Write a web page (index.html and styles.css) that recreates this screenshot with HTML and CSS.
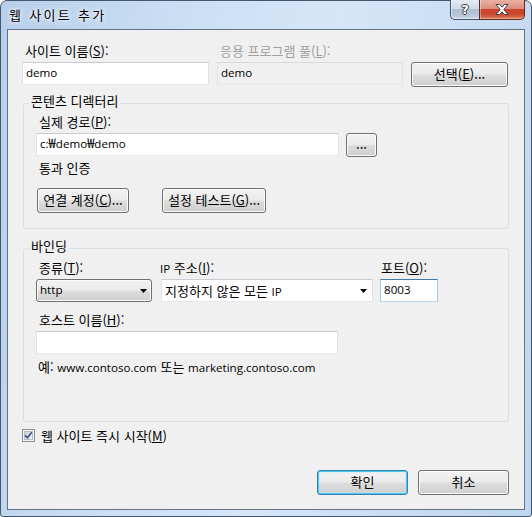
FILE: index.html
```html
<!DOCTYPE html>
<html lang="ko">
<head>
<meta charset="utf-8">
<title>웹 사이트 추가</title>
<link rel="stylesheet" href="styles.css">
</head>
<body>
<div class="window">
  <div class="titlebar">
    <div class="title">웹 사이트 추가</div>
    <div class="caption">
      <div class="cbtn help"><span>?</span></div>
      <div class="cbtn close">
        <svg width="14" height="11" viewBox="0 0 14 11"><path d="M1 0.5 H4.5 L7 3.2 L9.5 0.5 H13 L8.8 5.5 L13 10.5 H9.5 L7 7.8 L4.5 10.5 H1 L5.2 5.5 Z" fill="#fff" stroke="#3d3d3d" stroke-width="1" stroke-linejoin="round"/></svg>
      </div>
    </div>
  </div>
  <div class="client">
    <div class="row top-row">
      <div class="col site-col">
        <div class="lbl">사이트 이름(<u>S</u>):</div>
        <div class="tb"><span class="en" lang="en">demo</span></div>
      </div>
      <div class="col pool-col">
        <div class="lbl disabled">응용 프로그램 풀(<u>L</u>):</div>
        <div class="tb ro"><span class="en" lang="en">demo</span></div>
      </div>
      <div class="btn b-select">선택(<u>E</u>)...</div>
    </div>

    <div class="group g-content">
      <div class="legend">콘텐츠 디렉터리</div>
      <div class="lbl path-lbl">실제 경로(<u>P</u>):</div>
      <div class="row path-row">
        <div class="tb tb-path"><span class="en" lang="en">c:</span>₩<span class="en" lang="en">demo</span>₩<span class="en" lang="en">demo</span></div>
        <div class="btn b-browse">...</div>
      </div>
      <div class="lbl pass">통과 인증</div>
      <div class="row btn-row">
        <div class="btn b-connect">연결 계정(<u>C</u>)...</div>
        <div class="btn b-test">설정 테스트(<u>G</u>)...</div>
      </div>
    </div>

    <div class="group g-binding">
      <div class="legend">바인딩</div>
      <div class="row bind-row">
        <div class="col type-col">
          <div class="lbl">종류(<u>T</u>):</div>
          <div class="dd">
            <span class="en" lang="en">http</span>
            <svg class="arrow" width="7" height="4" viewBox="0 0 7 4"><path d="M0 0 H7 L3.5 4 Z" fill="#000"/></svg>
          </div>
        </div>
        <div class="col ip-col">
          <div class="lbl ip-lbl"><span class="en" lang="en">IP</span> 주소(<u>I</u>):</div>
          <div class="combo">
            <span>지정하지 않은 모든 <span class="en" lang="en">IP</span></span>
            <svg class="arrow" width="7" height="4" viewBox="0 0 7 4"><path d="M0 0 H7 L3.5 4 Z" fill="#000"/></svg>
          </div>
        </div>
        <div class="col port-col">
          <div class="lbl port-lbl">포트(<u>O</u>):</div>
          <div class="tb focus"><span class="en" lang="en">8003</span></div>
        </div>
      </div>
      <div class="lbl host-lbl">호스트 이름(<u>H</u>):</div>
      <div class="tb tb-host"></div>
      <div class="example">예: <span class="en" lang="en">www.contoso.com</span> 또는 <span class="en" lang="en">marketing.contoso.com</span></div>
    </div>

    <div class="row check-row">
      <svg class="chk" width="13" height="13" viewBox="0 0 13 13">
        <defs>
          <linearGradient id="cg" x1="0" y1="0" x2="1" y2="1">
            <stop offset="0" stop-color="#cbcfd5"/>
            <stop offset="1" stop-color="#f6f6f6"/>
          </linearGradient>
        </defs>
        <rect x="0.5" y="0.5" width="12" height="12" fill="#f4f4f4" stroke="#8e8f8f"/>
        <rect x="2.5" y="2.5" width="8" height="8" fill="url(#cg)" stroke="#b6bcc4"/>
        <path d="M3.2 6.4 L5.4 8.8 L9.8 3.2" fill="none" stroke="#3b5487" stroke-width="1.7"/>
      </svg>
      <span class="chk-lbl">웹 사이트 즉시 시작(<u>M</u>)</span>
    </div>

    <div class="row footer">
      <div class="btn default">확인</div>
      <div class="btn">취소</div>
    </div>
  </div>
</div>
</body>
</html>
```

FILE: styles.css
```css
html, body {
  margin: 0;
  padding: 0;
}

body {
  width: 532px;
  height: 517px;
  background: #ffffff;
  font-family: "Noto Sans CJK KR", sans-serif;
  font-size: 13px;
  color: #000;
}

.en {
  font-family: "Open Sans", "Noto Sans CJK KR", sans-serif;
  font-size: 11.6px;
  line-height: 12px;
}

.window {
  box-sizing: border-box;
  width: 532px;
  height: 517px;
  border: 1px solid #44576d;
  border-radius: 7px 7px 3px 3px;
  background: linear-gradient(100deg, #b7cfea 0%, #cbdff4 30%, #d6e6f7 55%, #c8dcf2 80%, #bed6ef 100%);
  padding: 0 6px 6px;
  display: flex;
  flex-direction: column;
}

.titlebar {
  height: 28px;
  flex: none;
  display: flex;
  justify-content: space-between;
  align-items: flex-start;
}

.title {
  margin: 6px 0 0 2px;
  line-height: 16px;
  letter-spacing: 2.3px;
  text-shadow: 0 0 6px #ffffff, 0 0 3px #ffffff;
}

.caption {
  display: flex;
  margin-top: -1px;
}

.cbtn {
  box-sizing: border-box;
  height: 20px;
  display: flex;
  align-items: center;
  justify-content: center;
  border: 1px solid #3f5068;
  border-top: none;
}

.help {
  width: 29px;
  border-right: none;
  border-radius: 0 0 0 5px;
  background: linear-gradient(#e4ebf3 0%, #cfdae6 45%, #aebfd2 50%, #b7c8da 80%, #cbd9e7 100%);
  box-shadow: inset 0 -1px 0 rgba(255,255,255,0.5), inset 1px 0 0 rgba(255,255,255,0.5);
}

.help span {
  font-family: "DejaVu Sans", sans-serif;
  font-weight: bold;
  font-size: 13px;
  line-height: 14px;
  color: #ffffff;
  text-shadow: -1px 0 0 #3a3a3a, 1px 0 0 #3a3a3a, 0 -1px 0 #3a3a3a, 0 1px 0 #3a3a3a;
}

.close {
  width: 46px;
  border-radius: 0 0 5px 0;
  border-color: #5b2a22;
  background: linear-gradient(#eab1a4 0%, #de8f7d 45%, #c8452c 50%, #c84a30 75%, #dd7f5e 100%);
  box-shadow: inset 0 -1px 0 rgba(255,200,170,0.6), inset 1px 0 0 rgba(255,255,255,0.35);
}

.client {
  flex: 1;
  background: #f0f0f0;
  border: 1px solid #5f7389;
  padding: 13px 15px 0 14px;
}

.row {
  display: flex;
}

.col {
  display: flex;
  flex-direction: column;
}

.lbl {
  line-height: 16px;
  padding-left: 3px;
  white-space: nowrap;
}

.lbl.disabled {
  color: #a0a0a0;
}

u {
  text-decoration: underline;
  text-underline-offset: 1px;
}

/* text boxes */
.tb {
  box-sizing: border-box;
  height: 23px;
  background: #ffffff;
  border: 1px solid;
  border-color: #c9ccd2 #e2e3ea #e3e9ef #e2e3ea;
  padding: 0 3px;
  line-height: 17px;
  white-space: nowrap;
}

.tb.ro {
  background: #f0f0f0;
  border-color: #d7dadf #e2e3ea #e3e9ef #e2e3ea;
}

.tb.focus {
  border-color: #3d7bad #a4c9e3 #b7d9ed #a4c9e3;
}

/* buttons */
.btn {
  box-sizing: border-box;
  height: 25px;
  border: 1px solid #707070;
  border-radius: 3px;
  background: linear-gradient(#f2f2f2 0%, #ebebeb 48%, #dddddd 52%, #cfcfcf 100%);
  box-shadow: inset 0 0 0 1px #fbfbfb;
  display: flex;
  align-items: center;
  justify-content: center;
  white-space: nowrap;
  line-height: 16px;
  padding-bottom: 2px;
}

.btn.default {
  border-color: #3c7fb1;
  box-shadow: inset 0 0 0 1px #48c7f0, inset 0 0 2px 1px #b6e7f8;
}

/* top row */
.site-col {
  width: 187px;
}

.pool-col {
  width: 186px;
  margin-left: 8px;
}

.top-row .lbl {
  margin-bottom: 3px;
}

.b-select {
  width: 97px;
  margin-left: 8px;
  margin-top: 19px;
}

/* group boxes */
.group {
  margin-left: 1px;
  border: 1px solid #d5dfe5;
  border-radius: 3px;
}

.legend {
  width: fit-content;
  margin: -11px 0 0 -7px;
  padding: 0 2px;
  line-height: 16px;
  background: #f0f0f0;
  white-space: nowrap;
}

.g-content {
  margin-top: 16px;
  padding: 0 12px 15px 12px;
}

.path-lbl {
  margin-top: 5px;
  margin-bottom: 3px;
}

.path-row {
  align-items: flex-start;
}

.tb-path {
  width: 303px;
}

.b-browse {
  width: 31px;
  height: 24px;
  margin-left: 7px;
}

.lbl.pass {
  margin-top: 3px;
}

.btn-row {
  margin-top: 12px;
}

.b-connect {
  width: 92px;
  margin-left: 1px;
}

.b-test {
  width: 104px;
  margin-left: 33px;
}

.g-binding {
  margin-top: 19px;
  padding: 0 12px 46px 12px;
}

.bind-row {
  margin-top: 6px;
}

.bind-row .lbl {
  margin-bottom: 3px;
}

.type-col {
  width: 116px;
}

.ip-col {
  width: 212px;
  margin-left: 9px;
}

.port-col {
  width: 58px;
  margin-left: 7px;
}

.ip-lbl {
  padding-left: 0;
  margin-left: -1px;
}

.port-lbl {
  padding-left: 1px;
}

.dd {
  box-sizing: border-box;
  height: 23px;
  border: 1px solid #707070;
  border-radius: 3px;
  background: linear-gradient(#f2f2f2 0%, #ebebeb 48%, #dddddd 52%, #cfcfcf 100%);
  box-shadow: inset 0 0 0 1px #fbfbfb;
  display: flex;
  align-items: center;
  justify-content: space-between;
  padding: 0 4px 1px 3px;
}

.combo {
  box-sizing: border-box;
  height: 23px;
  background: #ffffff;
  border: 1px solid;
  border-color: #c9ccd2 #e2e3ea #e3e9ef #e2e3ea;
  display: flex;
  align-items: center;
  justify-content: space-between;
  padding: 0 5px 1px 3px;
  white-space: nowrap;
}

.arrow {
  flex: none;
  margin-top: 2px;
}

.host-lbl {
  margin-top: 10px;
  margin-bottom: 3px;
}

.tb-host {
  width: 302px;
}

.example {
  margin-top: 5px;
  padding-left: 2px;
  line-height: 16px;
  white-space: nowrap;
}

/* checkbox */
.check-row {
  margin-top: 7px;
  height: 13px;
  align-items: center;
}

.chk {
  display: block;
  flex: none;
}

.chk-lbl {
  margin-left: 6px;
  line-height: 16px;
  white-space: nowrap;
}

/* footer */
.footer {
  margin-top: 28px;
  justify-content: flex-end;
  gap: 10px;
}

.footer .btn {
  width: 91px;
}
```
